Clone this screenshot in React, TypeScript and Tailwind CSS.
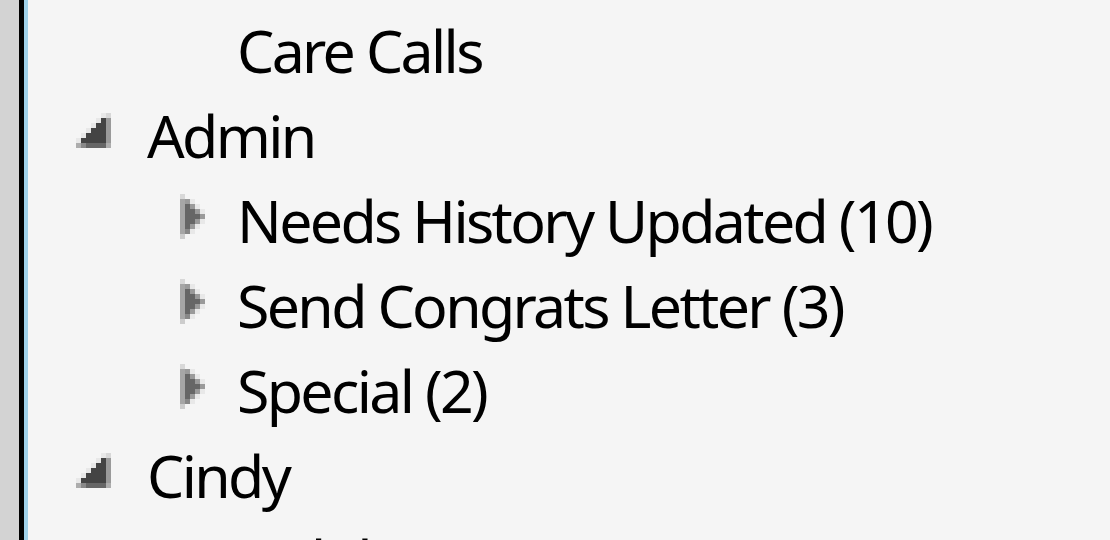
type Glyph = "expanded" | "collapsed" | "none";

interface Node {
  depth: number;
  label: string;
  glyph: Glyph;
}

const nodes: Node[] = [
  { depth: 2, label: "Care Calls", glyph: "none" },
  { depth: 1, label: "Admin", glyph: "expanded" },
  { depth: 2, label: "Needs History Updated (10)", glyph: "collapsed" },
  { depth: 2, label: "Send Congrats Letter (3)", glyph: "collapsed" },
  { depth: 2, label: "Special (2)", glyph: "collapsed" },
  { depth: 1, label: "Cindy", glyph: "expanded" },
  { depth: 2, label: "Holiday", glyph: "none" },
];

// pixel maps for the tree arrows, one cell = one screen pixel at 5x
const palette: Record<string, string> = {
  l: "#e8e8e8",
  m: "#d8d8d8",
  c: "#cccccc",
  d: "#444444",
  k: "#666666",
  n: "#888888",
  g: "#9a9a9a",
  a: "#a6a6a6",
  h: "#adadad",
};

const expandedMap = [
  ".....lm",
  "....ldg",
  "...lddg",
  "..ldddg",
  ".lddddg",
  "ldddddg",
  "hnkkkkh",
];

const collapsedMap = [
  "m....",
  "agl..",
  "akgl.",
  "akkgl",
  "akkkg",
  "akkgl",
  "akgl.",
  "anl..",
  "c....",
];

function PixelIcon({ map, x, y }: { map: string[]; x: number; y: number }) {
  const cells: JSX.Element[] = [];
  map.forEach((row, r) =>
    row.split("").forEach((ch, c) => {
      if (ch === ".") return;
      cells.push(
        <rect
          key={`${r}-${c}`}
          x={x + c * 5}
          y={y + r * 5}
          width={5}
          height={5}
          fill={palette[ch]}
        />
      );
    })
  );
  return <>{cells}</>;
}

function Arrow({ glyph }: { glyph: Glyph }) {
  return (
    <svg width="90" height="85" viewBox="0 0 90 85" shapeRendering="crispEdges" className="shrink-0">
      {glyph === "expanded" && <PixelIcon map={expandedMap} x={19} y={20} />}
      {glyph === "collapsed" && <PixelIcon map={collapsedMap} x={33} y={16} />}
    </svg>
  );
}

function TreeRow({ node }: { node: Node }) {
  return (
    <div className="flex h-[85px] items-center">
      <div className={node.depth === 1 ? "w-[29px] shrink-0" : "w-[119px] shrink-0"} />
      <Arrow glyph={node.glyph} />
      <span className="whitespace-nowrap text-[59px] leading-[85px] tracking-[-0.045em] text-black">
        {node.label}
      </span>
    </div>
  );
}

export default function App() {
  return (
    <div className="flex h-[540px] w-[1110px] overflow-hidden bg-[#f5f5f5] font-['Noto_Sans',sans-serif]">
      <div className="w-[19px] shrink-0 bg-[#d3d3d3]" />
      <div className="w-[5px] shrink-0 bg-black" />
      <div className="w-[4px] shrink-0 bg-[#9fd0e8]" />
      <div className="flex flex-1 flex-col pt-[8px]">
        {nodes.map((n) => (
          <TreeRow key={n.label} node={n} />
        ))}
      </div>
    </div>
  );
}
